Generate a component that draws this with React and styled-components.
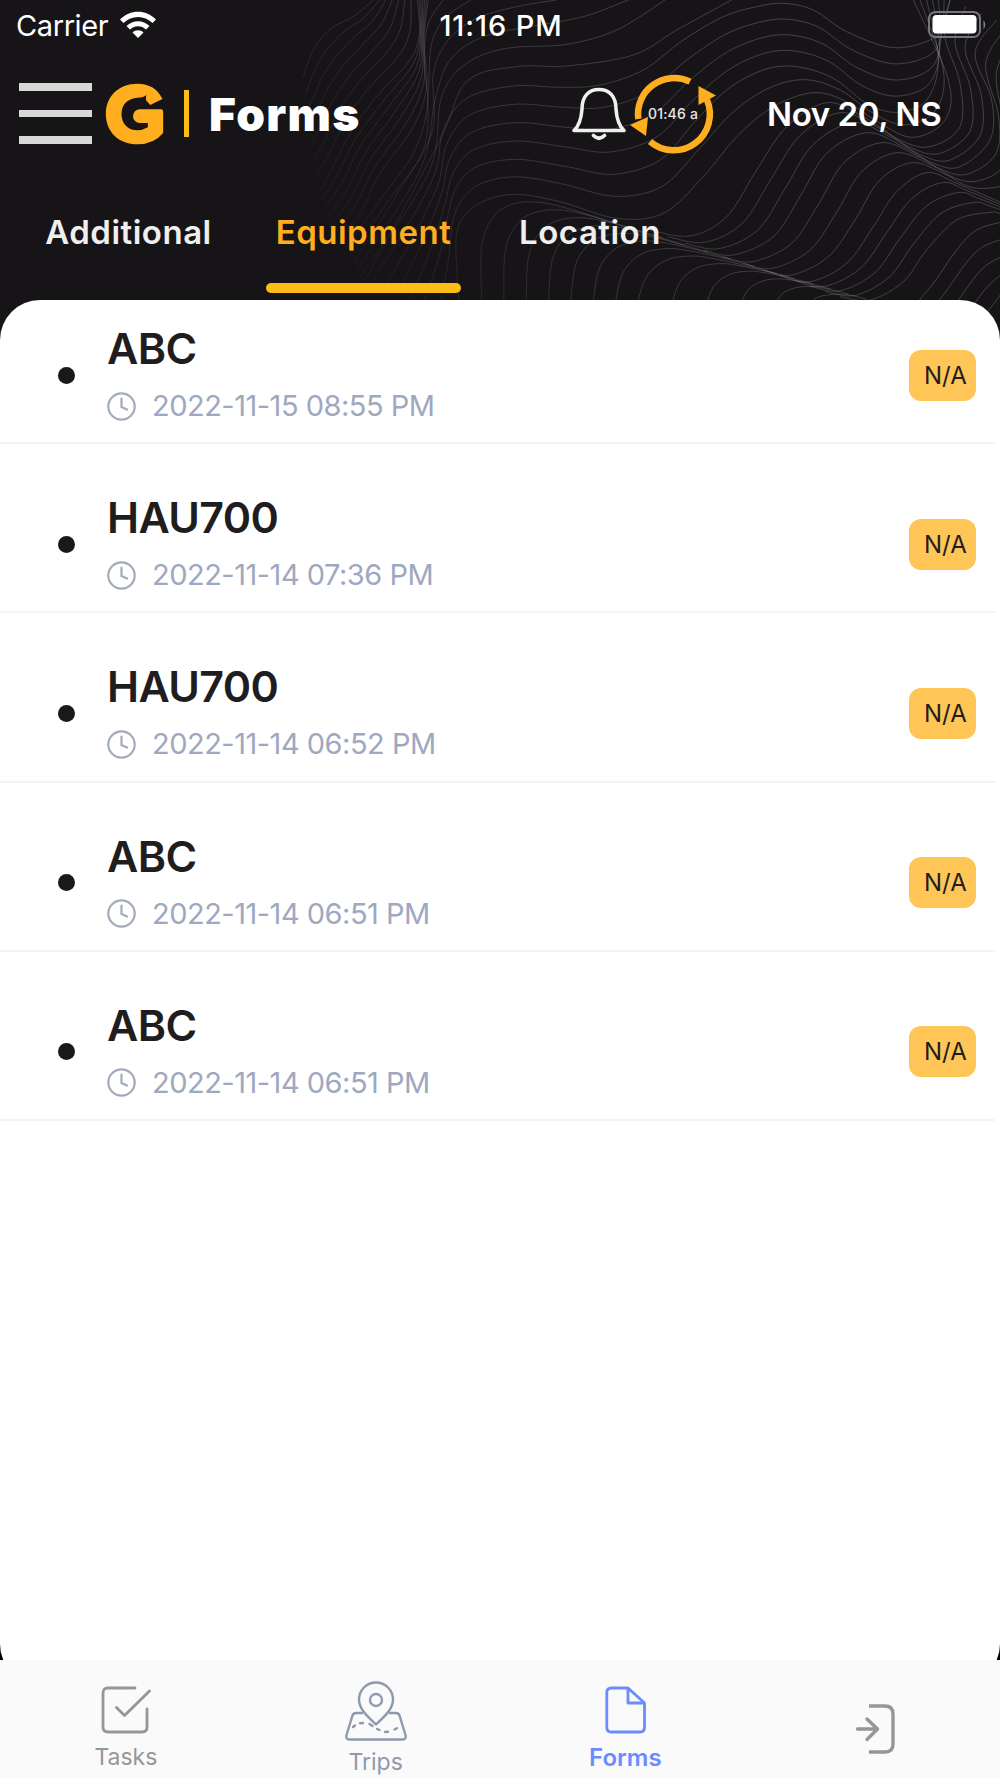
import React from 'react'
import styled, { createGlobalStyle } from 'styled-components'

const GlobalStyle = createGlobalStyle`
  body {
    margin: 0;
    background: #000;
    font-family: Inter, sans-serif;
  }
  * {
    box-sizing: border-box;
  }
`
const Screen = styled.div`
  width: 1000px;
  height: 1778px;
  display: flex;
  flex-direction: column;
  position: relative;
  overflow: hidden;
`
const Backdrop = styled.svg`
  position: absolute;
  top: 0;
  left: 0;
  background: #161416;
`
const StatusBar = styled.div`
  display: grid;
  grid-template-columns: 1fr auto 1fr;
  align-items: center;
  height: 50px;
  padding: 0 14px 0 16px;
  position: relative;
  color: white;
  font-size: 29px;
`
const Carrier = styled.div`
  display: flex;
  align-items: center;
  gap: 11px;
  letter-spacing: -0.4px;
`
const Clock = styled.span`
  font-weight: 500;
  letter-spacing: 0.9px;
`
const Battery = styled.svg`
  justify-self: end;
`
const TopBar = styled.div`
  display: flex;
  align-items: center;
  height: 127px;
  padding-left: 19px;
  position: relative;
`
const Burger = styled.div`
  display: flex;
  flex-direction: column;
  gap: 19px;
  width: 73px;
  margin-right: 13px;
`
const BurgerLine = styled.div`
  height: 7.6px;
  background: #d8d8d8;
`
const TitleBar = styled.div`
  width: 5px;
  height: 47px;
  margin: 0 20px 0 20px;
  background: #fdbd17;
`
const Title = styled.h1`
  width: 363px;
  margin: 0;
  color: white;
  font-size: 46px;
  font-weight: 900;
  line-height: 50px;
  letter-spacing: 1.3px;
`
const Timer = styled.div`
  display: grid;
  place-items: center;
  width: 86px;
  height: 82px;
  margin-left: 4px;
  color: #e8e8e8;
  font-size: 14px;
  font-weight: 500;
  letter-spacing: 0.2px;
  & > * {
    grid-area: 1 / 1;
  }
`
const DateLabel = styled.div`
  margin-left: 51px;
  color: white;
  font-size: 33px;
  font-weight: 600;
  letter-spacing: -0.4px;
`
const Tabs = styled.div`
  display: flex;
  gap: 45px;
  height: 123px;
  padding-left: 36px;
  position: relative;
`
const Tab = styled.div`
  display: flex;
  flex-direction: column;
  align-items: center;
  justify-content: space-between;
  width: ${({ $width }) => $width}px;
  height: 116px;
  padding-top: 35px;
  color: ${({ $active }) => ($active ? '#ffae1f' : '#efefef')};
  font-size: 33px;
  font-weight: 600;
  line-height: 40px;
  letter-spacing: 0.5px;
  &::after {
    content: '';
    width: 100%;
    height: 10px;
    border-radius: 5px;
    background: ${({ $active }) => ($active ? '#fdbd17' : 'transparent')};
  }
`
const Sheet = styled.div`
  flex: none;
  height: 1384px;
  border-radius: 40px;
  background: white;
  overflow: hidden;
  position: relative;
`
const List = styled.div`
  margin-top: -25px;
`
const Row = styled.div`
  display: flex;
  align-items: center;
  width: 995px;
  height: 169.2px;
  padding: 33px 19px 0 58px;
  border-bottom: 2px solid #f1f4fb;
`
const Dot = styled.div`
  width: 17px;
  height: 17px;
  margin-right: 32px;
  border-radius: 50%;
  background: #1a1819;
`
const RowBody = styled.div`
  flex: 1;
  padding-bottom: 4px;
`
const Name = styled.div`
  color: #1f1d1e;
  font-size: 43px;
  font-weight: 600;
  line-height: 52px;
  letter-spacing: -0.6px;
`
const When = styled.div`
  display: flex;
  align-items: center;
  gap: 16px;
  margin-top: 14px;
  color: #9ea8c0;
  font-size: 29px;
  line-height: 36px;
  letter-spacing: -0.5px;
`
const Badge = styled.div`
  width: 67px;
  height: 51px;
  padding-left: 15px;
  border-radius: 12px;
  background: #ffc556;
  color: #1f1d1e;
  font-size: 24px;
  line-height: 51px;
`
const TabBar = styled.div`
  display: grid;
  grid-template-columns: repeat(4, 1fr);
  flex: none;
  height: 118px;
  margin-top: -24px;
  padding-left: 1px;
  background: #fafafa;
  position: relative;
`
const NavItem = styled.div`
  display: flex;
  flex-direction: column;
  align-items: center;
  padding-top: ${({ $top }) => $top}px;
  color: ${({ $color }) => $color};
  font-size: ${({ $active }) => ($active ? 24 : 23)}px;
  font-weight: ${({ $active }) => ($active ? 600 : 400)};
  line-height: 28px;
  gap: ${({ $gap }) => $gap || 0}px;
`

// Every family is a run of key curves; the lines in between are interpolated.
const families = [
  [
    [0, [[1120, 0], [1060, 50], [1000, 80], [960, 120], [935, 160], [918, 205], [910, 230]]],
    [7, [[1252, 0], [1258, 100], [1230, 180], [1130, 290], [1050, 400], [1000, 500], [960, 570]]],
    [13, [[1285, 0], [1272, 120], [1280, 260], [1240, 380], [1140, 520], [1080, 640], [1000, 740]]],
  ],
  [
    [0, [[1330, 0], [1285, 70], [1272, 180], [1282, 320], [1240, 460], [1140, 600], [1040, 740]]],
    [1, [[1413, 0], [1340, 50], [1295, 130], [1285, 280], [1270, 450], [1160, 610], [1050, 770]]],
  ],
  [
    [0, [[1668, 0], [1550, 20], [1430, 55], [1345, 120], [1300, 220], [1295, 400], [1180, 600], [1060, 790]]],
    [1, [[1885, 0], [1750, 50], [1600, 78], [1450, 110], [1350, 180], [1305, 300], [1260, 510], [1070, 810]]],
    [2, [[1995, 0], [1850, 90], [1700, 133], [1520, 145], [1400, 190], [1325, 290], [1285, 520], [1080, 830]]],
    [3, [[2195, 0], [2030, 90], [1900, 165], [1700, 198], [1550, 200], [1400, 245], [1315, 430], [1090, 850]]],
  ],
  [
    [0, [[1100, 870], [1220, 680], [1305, 520], [1330, 390], [1400, 295], [1540, 258], [1680, 262], [1800, 255], [1930, 210], [2050, 120], [2170, 50], [2270, 20], [2350, 10], [2440, 30], [2540, 95], [2680, 143], [2800, 115], [2830, 60], [2850, 0]]],
    [4, [[1260, 940], [1320, 760], [1345, 640], [1370, 560], [1430, 500], [1550, 478], [1700, 500], [1840, 523], [1980, 480], [2080, 370], [2180, 270], [2290, 210], [2390, 200], [2500, 235], [2600, 310], [2690, 337], [2780, 300], [2815, 180], [2780, 0]]],
    [6, [[1378, 920], [1370, 800], [1370, 700], [1400, 640], [1460, 600], [1550, 583], [1680, 605], [1850, 655], [1990, 640], [2110, 530], [2210, 410], [2320, 320], [2440, 278], [2540, 305], [2640, 370], [2740, 412], [2835, 360], [2845, 240], [2740, 0]]],
  ],
  [
    [0, [[1950, 690], [2070, 708], [2180, 650], [2270, 510], [2360, 380], [2480, 308], [2590, 350], [2700, 420], [2790, 440], [2880, 380], [2880, 250], [2835, 110], [2850, 0]]],
    [3, [[2110, 750], [2200, 765], [2320, 710], [2400, 590], [2480, 460], [2600, 398], [2710, 440], [2800, 490], [2880, 500], [2970, 420], [2975, 300], [2925, 160], [2990, 60]]],
    [6, [[2290, 810], [2375, 825], [2485, 770], [2565, 660], [2638, 542], [2735, 488], [2830, 520], [2897, 556], [2955, 565], [3022, 545], [3038, 450], [3020, 265], [3042, 165]]],
  ],
  [
    [7, [[2340, 827], [2430, 845], [2540, 790], [2620, 680], [2690, 575], [2780, 518], [2870, 550], [3020, 615]]],
    [11, [[2520, 890], [2610, 900], [2710, 845], [2780, 750], [2870, 660], [2970, 637], [3000, 640], [3040, 650]]],
  ],
  [
    [0, [[2740, 920], [2800, 850], [2870, 750], [2930, 690], [3010, 665]]],
    [4, [[2935, 970], [2950, 950], [2970, 925], [2990, 900], [3010, 870]]],
  ],
  [
    [1, [[1445, 910], [1445, 740], [1480, 650], [1540, 612], [1620, 607], [1720, 630], [1850, 672]]],
    [8, [[1912, 910], [1940, 830], [2000, 780], [2080, 768], [2150, 778], [2230, 795], [2330, 820]]],
    [13, [[2430, 910], [2450, 893], [2480, 885], [2510, 882], [2540, 884], [2570, 890], [2600, 898]]],
  ],
]

const toPath = (pts) => {
  let d = `M${pts[0][0]} ${pts[0][1]}`
  for (let i = 0; i < pts.length - 1; i++) {
    const a = pts[i - 1] || pts[i]
    const b = pts[i]
    const c = pts[i + 1]
    const e = pts[i + 2] || c
    d += `C${b[0] + (c[0] - a[0]) / 6} ${b[1] + (c[1] - a[1]) / 6} ${c[0] - (e[0] - b[0]) / 6} ${c[1] - (e[1] - b[1]) / 6} ${c[0]} ${c[1]}`
  }
  return d
}

const blend = (keys) => {
  const out = [toPath(keys[0][1])]
  for (let k = 1; k < keys.length; k++) {
    const [from, a] = keys[k - 1]
    const [to, b] = keys[k]
    for (let n = from + 1; n <= to; n++) {
      const t = (n - from) / (to - from)
      out.push(toPath(a.map((p, i) => [p[0] + (b[i][0] - p[0]) * t, p[1] + (b[i][1] - p[1]) * t])))
    }
  }
  return out
}

const contours = families.flatMap(blend)

const Contours = () => (
  <Backdrop width="1000" height="345" viewBox="0 0 3000 1035">
    <defs>
      <linearGradient id="fade" gradientUnits="userSpaceOnUse" x1="950" y1="800" x2="2100" y2="0">
        <stop offset="0" stopColor="#fff" stopOpacity="0.01" />
        <stop offset="0.5" stopColor="#fff" stopOpacity="0.14" />
        <stop offset="1" stopColor="#fff" stopOpacity="0.19" />
      </linearGradient>
    </defs>
    <g fill="none" stroke="url(#fade)" strokeWidth="3">
      {contours.map((d, i) => <path key={i} d={d} />)}
    </g>
  </Backdrop>
)

const WifiIcon = () => (
  <svg width="38" height="28" viewBox="0 0 38 28" fill="white">
    <path d="M1 8.500C11-2 27-2 37 8.500L33.500 12C25.500 4 12.500 4 4.500 12Z" />
    <path d="M7.500 15C14 8.500 24 8.500 30.500 15L27 18.500C22.500 14 15.500 14 11 18.500Z" />
    <path d="M13.500 21.500C16.500 18.500 21.500 18.500 24.500 21.500L19 27Z" />
  </svg>
)

const BatteryIcon = () => (
  <Battery width="60" height="28" viewBox="0 0 60 28">
    <rect x="3" y="1" width="51" height="25" rx="6.500" fill="none" stroke="#77767a" strokeWidth="2" />
    <rect x="6.500" y="4" width="44" height="18.500" rx="4" fill="white" />
    <path d="M57.500 9Q61 13.500 57.500 18.500Z" fill="#87868a" />
  </Battery>
)

const Logo = () => (
  <svg width="59" height="62" viewBox="0 0 176 186">
    <path
      fill="#ffae1f"
      d="M172 48Q150 2 97 2C40 2 2 40 2 93S40 184 97 184Q146 184 174 150V86Q174 79 167 79H104A20 20 0 0 0 104 120H128V133Q112 142 97 142C68 142 49 122 49 93S68 46 97 44Q115 44 123 36L122 51L135 66L172 48Z"
    />
  </svg>
)

const BellIcon = () => (
  <svg width="54" height="54" viewBox="0 0 54 54" fill="none" stroke="#efefef" strokeWidth="3.600" strokeLinecap="round" strokeLinejoin="round">
    <path d="M2 43.500Q9 37 10 22C10 9 17 2.500 27 2.500S44 9 44 22Q45 37 52 43.500Z" />
    <path d="M21.500 48.500Q27 54 32.500 48.500" />
  </svg>
)

const CycleIcon = () => (
  <svg width="86" height="82" viewBox="0 0 86 82" fill="none" stroke="#ffae1f" strokeWidth="6.500">
    <path d="M60 8.700A36.200 36.200 0 0 0 8.300 46" />
    <path d="M20 68.500A36.200 36.200 0 0 0 77 27" />
    <path fill="#ffae1f" stroke="none" d="M0 52L18 44L16 63Z" />
    <path fill="#ffae1f" stroke="none" d="M68.500 13L86 22.500L68.500 32Z" />
  </svg>
)

const ClockIcon = () => (
  <svg width="29" height="29" viewBox="0 0 29 29" fill="none" stroke="#a3abbb" strokeWidth="2.200" strokeLinecap="round">
    <circle cx="14.500" cy="14.500" r="13.200" />
    <path d="M14.500 6.500V15L20 17.500" />
  </svg>
)

const TasksIcon = () => (
  <svg width="50" height="48" viewBox="0 0 50 48" fill="none" stroke="currentColor" strokeWidth="2.800" strokeLinecap="round">
    <path d="M34 2H7Q2 2 2 7V41Q2 46 7 46H41Q46 46 46 41V23" />
    <path d="M15.500 21.500L23.500 29.500L48.500 5" strokeLinejoin="round" />
  </svg>
)

const TripsIcon = () => (
  <svg width="62" height="60" viewBox="0 0 62 60" fill="none" stroke="currentColor" strokeWidth="2.400" strokeLinejoin="round">
    <path d="M18 32H11Q8.500 32 7.500 34.500L1.500 54Q0.500 58.500 4.500 58.500H57.500Q61.500 58.500 60.500 54L54.500 34.500Q53.500 32 51 32H44" />
    <path d="M31 43.500C22 35 14 28 14 18.500A17 17 0 0 1 48 18.500C48 28 40 35 31 43.500Z" />
    <circle cx="31" cy="19" r="6" />
    <path d="M8 46L10 44.500M15 42.200L18 42M24.500 43L27.500 45M32 48L34.500 49M40 51L43 50.800M49.500 48.500L52 47.200" strokeLinecap="round" />
  </svg>
)

const FormsIcon = () => (
  <svg width="41" height="48" viewBox="0 0 41 48" fill="none" stroke="currentColor" strokeWidth="2.800" strokeLinejoin="round">
    <path d="M23 2H6.500Q1.800 2 1.800 6.500V41.500Q1.800 46 6.500 46H35Q39.500 46 39.500 41.500V17Z" />
    <path d="M23 2V17H39.500" />
  </svg>
)

const ExitIcon = () => (
  <svg width="40" height="50" viewBox="0 0 40 50" fill="none" stroke="currentColor" strokeWidth="3.400" strokeLinejoin="round">
    <path d="M14 2H30Q38 2 38 10V40Q38 48 30 48H14" />
    <path d="M2.500 25H22.500M12 15L22.500 25L12 35.500" strokeLinecap="round" />
  </svg>
)

const entries = [
  { name: 'ABC', date: '2022-11-15 08:55 PM' },
  { name: 'HAU700', date: '2022-11-14 07:36 PM' },
  { name: 'HAU700', date: '2022-11-14 06:52 PM' },
  { name: 'ABC', date: '2022-11-14 06:51 PM' },
  { name: 'ABC', date: '2022-11-14 06:51 PM' },
]

const App = () => (
  <>
    <GlobalStyle />
    <Screen>
      <Contours />
      <StatusBar>
        <Carrier>
          <span>Carrier</span>
          <WifiIcon />
        </Carrier>
        <Clock>11:16 PM</Clock>
        <BatteryIcon />
      </StatusBar>
      <TopBar>
        <Burger>
          <BurgerLine />
          <BurgerLine />
          <BurgerLine />
        </Burger>
        <Logo />
        <TitleBar />
        <Title>Forms</Title>
        <BellIcon />
        <Timer>
          <CycleIcon />
          <span>01:46 a</span>
        </Timer>
        <DateLabel>Nov 20, NS</DateLabel>
      </TopBar>
      <Tabs>
        <Tab $width={185}>Additional</Tab>
        <Tab $width={195} $active>Equipment</Tab>
        <Tab $width={168}>Location</Tab>
      </Tabs>
      <Sheet>
        <List>
          {entries.map((entry, i) => (
            <Row key={i}>
              <Dot />
              <RowBody>
                <Name>{entry.name}</Name>
                <When>
                  <ClockIcon />
                  <span>{entry.date}</span>
                </When>
              </RowBody>
              <Badge>N/A</Badge>
            </Row>
          ))}
        </List>
      </Sheet>
      <TabBar>
        <NavItem $top={26} $gap={9} $color="#969696">
          <TasksIcon />
          Tasks
        </NavItem>
        <NavItem $top={21} $gap={7} $color="#8f99ad">
          <TripsIcon />
          Trips
        </NavItem>
        <NavItem $top={26} $gap={10} $color="#6b8cff" $active>
          <FormsIcon />
          Forms
        </NavItem>
        <NavItem $top={44} $color="#969696">
          <ExitIcon />
        </NavItem>
      </TabBar>
    </Screen>
  </>
)

export default App
